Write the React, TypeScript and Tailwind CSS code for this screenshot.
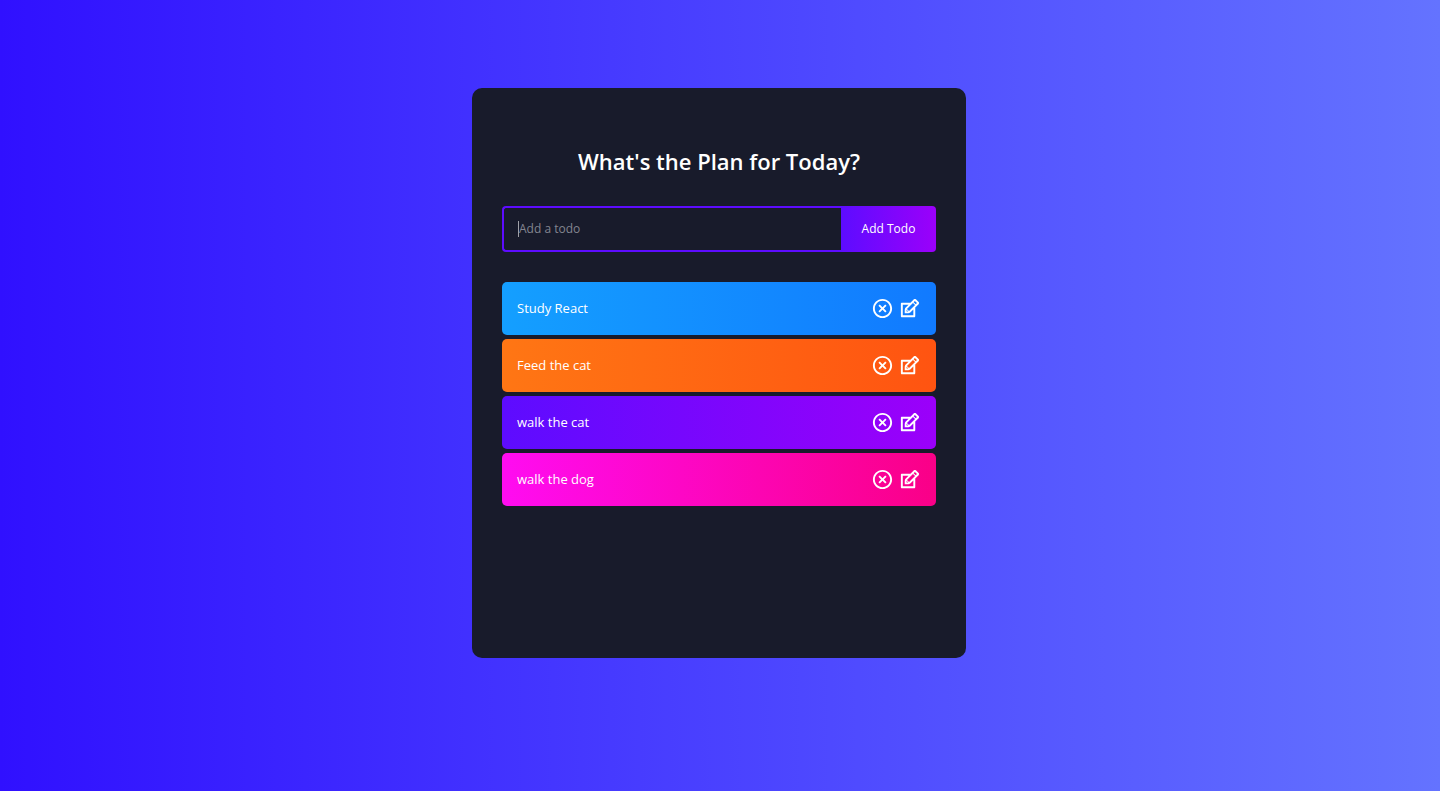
import { useState, type FormEvent } from 'react';
import { RiCloseCircleLine } from 'react-icons/ri';
import { TiEdit } from 'react-icons/ti';

type Todo = { id: number; text: string };

const rowColors = [
  'from-[#149fff] to-[#117aff]',
  'from-[#ff7614] to-[#ff5411]',
  'from-[#5d0cff] to-[#9b00fa]',
  'from-[#ff0cf1] to-[#fa0087]',
];

const initialTodos: Todo[] = [
  { id: 1, text: 'Study React' },
  { id: 2, text: 'Feed the cat' },
  { id: 3, text: 'walk the cat' },
  { id: 4, text: 'walk the dog' },
];

function TodoForm({ onAdd }: { onAdd: (text: string) => void }) {
  const [value, setValue] = useState('');

  const submit = (event: FormEvent) => {
    event.preventDefault();
    if (!value.trim()) return;
    onAdd(value.trim());
    setValue('');
  };

  return (
    <form onSubmit={submit} className="mb-[30px] flex h-[46px]">
      <div className="relative flex min-w-0 flex-1">
        <input
          type="text"
          aria-label="Add a todo"
          placeholder="Add a todo"
          value={value}
          onChange={(event) => setValue(event.target.value)}
          className="w-full min-w-0 rounded-l-sm border-2 border-r-0 border-[#5d0cff] bg-transparent px-[15px] text-xs font-medium text-white outline-none placeholder:text-[#838590]"
        />
        {value === '' && (
          <span aria-hidden="true" className="absolute top-[15px] left-4 h-4 w-px bg-[#a0a1a8]" />
        )}
      </div>
      <button
        type="submit"
        className="w-[95px] cursor-pointer rounded-r-sm bg-linear-to-r/srgb from-[#5d0cff] to-[#9b00fa] text-xs font-medium text-white"
      >
        Add Todo
      </button>
    </form>
  );
}

export default function App() {
  const [todos, setTodos] = useState(initialTodos);

  const add = (text: string) => setTodos([{ id: Date.now(), text }, ...todos]);
  const remove = (id: number) => setTodos(todos.filter((todo) => todo.id !== id));
  const edit = (id: number) => {
    const text = window.prompt('Update your item');
    if (text) setTodos(todos.map((todo) => (todo.id === id ? { ...todo, text } : todo)));
  };

  return (
    <div className="min-h-screen bg-linear-to-r/srgb from-[#3010ff] to-[#6473ff] pt-[88px] pr-[18px] pb-8 pl-4 font-['Trebuchet_MS','Open_Sans',sans-serif]">
      <main className="mx-auto min-h-[570px] max-w-[494px] rounded-[10px] bg-[#181b2b] px-[30px] pt-[57px] pb-8">
        <h1 className="mb-[29px] text-center text-[22px] leading-8 font-semibold text-white">
          What's the Plan for Today?
        </h1>
        <TodoForm onAdd={add} />
        <ul className="flex flex-col gap-1">
          {todos.map((todo, index) => (
            <li
              key={todo.id}
              className={`flex min-h-[53px] items-center justify-between rounded-[5px] bg-linear-to-r/srgb px-[15px] text-[13px] font-medium text-white ${rowColors[index % rowColors.length]}`}
            >
              <span>{todo.text}</span>
              <span className="flex items-center gap-1">
                <button type="button" aria-label={`Remove ${todo.text}`} onClick={() => remove(todo.id)} className="cursor-pointer">
                  <RiCloseCircleLine size={23} />
                </button>
                <button type="button" aria-label={`Edit ${todo.text}`} onClick={() => edit(todo.id)} className="cursor-pointer">
                  <TiEdit size={23} />
                </button>
              </span>
            </li>
          ))}
        </ul>
      </main>
    </div>
  );
}
